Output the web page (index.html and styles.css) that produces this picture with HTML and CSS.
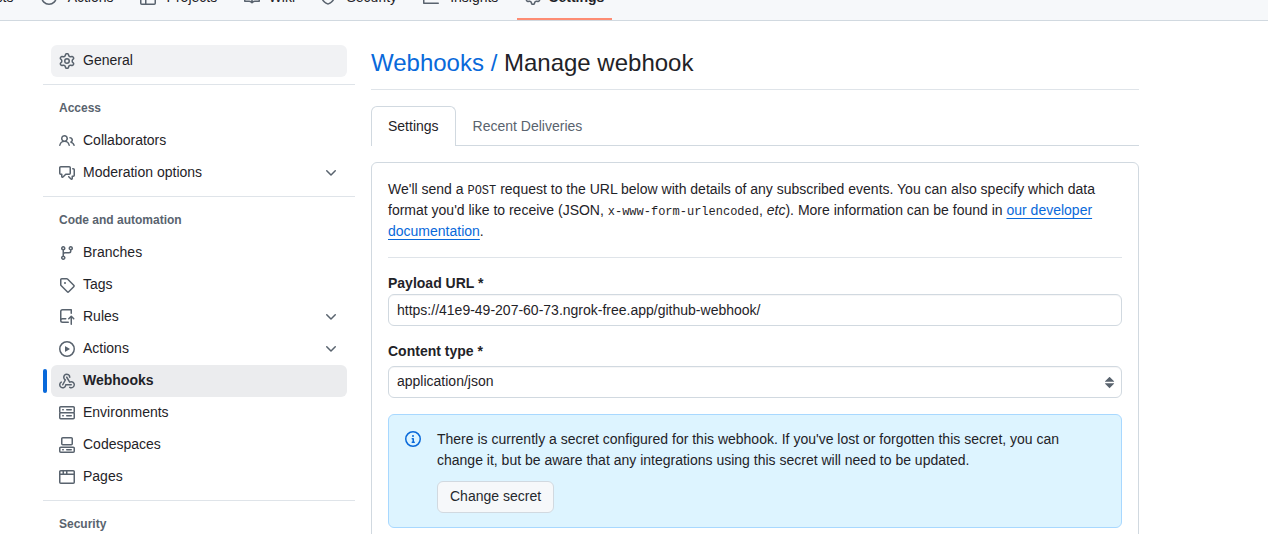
FILE: index.html
```html
<!DOCTYPE html>
<html lang="en">
<head>
<meta charset="utf-8">
<title>Manage webhook</title>
<link rel="stylesheet" href="styles.css">
</head>
<body>
<svg class="sprite" aria-hidden="true">
  <symbol id="play" viewBox="0 0 16 16"><path d="M8 0a8 8 0 1 1 0 16A8 8 0 0 1 8 0ZM1.5 8a6.5 6.5 0 1 0 13 0 6.5 6.5 0 0 0-13 0Zm4.879-2.773 4.264 2.559a.25.25 0 0 1 0 .428l-4.264 2.559A.25.25 0 0 1 6 10.559V5.442a.25.25 0 0 1 .379-.215Z"/></symbol>
  <symbol id="table" viewBox="0 0 16 16"><path d="M0 1.75C0 .784.784 0 1.75 0h12.5C15.216 0 16 .784 16 1.75v12.5A1.75 1.75 0 0 1 14.25 16H1.75A1.75 1.75 0 0 1 0 14.25ZM6.5 6.5v8h7.75a.25.25 0 0 0 .25-.25V6.5Zm8-1.5V1.75a.25.25 0 0 0-.25-.25H6.5V5Zm-13 1.5v7.75c0 .138.112.25.25.25H5v-8ZM5 5V1.5H1.75a.25.25 0 0 0-.25.25V5Z"/></symbol>
  <symbol id="book" viewBox="0 0 16 16"><path d="M0 1.75A.75.75 0 0 1 .75 1h4.253c1.227 0 2.317.59 3 1.501A3.743 3.743 0 0 1 11.006 1h4.245a.75.75 0 0 1 .75.75v10.5a.75.75 0 0 1-.75.75h-4.507a2.25 2.25 0 0 0-1.591.659l-.622.621a.75.75 0 0 1-1.06 0l-.622-.621A2.25 2.25 0 0 0 5.258 13H.75a.75.75 0 0 1-.75-.75Zm7.251 10.324.004-5.073-.002-2.253A2.25 2.25 0 0 0 5.003 2.5H1.5v9h3.757a3.75 3.75 0 0 1 1.994.574ZM8.755 4.75l-.004 7.322a3.752 3.752 0 0 1 1.992-.572H14.5v-9h-3.495a2.25 2.25 0 0 0-2.25 2.25Z"/></symbol>
  <symbol id="shield" viewBox="0 0 16 16"><path d="M7.467.133a1.748 1.748 0 0 1 1.066 0l5.25 1.68A1.75 1.75 0 0 1 15 3.48V7c0 1.566-.32 3.182-1.303 4.682-.983 1.498-2.585 2.813-5.032 3.855a1.697 1.697 0 0 1-1.33 0c-2.447-1.042-4.049-2.357-5.032-3.855C1.32 10.182 1 8.566 1 7V3.48a1.755 1.755 0 0 1 1.217-1.667Zm.61 1.429a.25.25 0 0 0-.153 0l-5.25 1.68a.25.25 0 0 0-.174.238V7c0 1.358.275 2.666 1.057 3.86.784 1.194 2.121 2.34 4.366 3.297a.196.196 0 0 0 .154 0c2.245-.956 3.582-2.104 4.366-3.298C13.225 9.666 13.5 8.36 13.5 7V3.48a.251.251 0 0 0-.174-.237l-5.25-1.68Z"/></symbol>
  <symbol id="graph" viewBox="0 0 16 16"><path d="M1.5 1.75V13.5h13.75a.75.75 0 0 1 0 1.5H.75a.75.75 0 0 1-.75-.75V1.75a.75.75 0 0 1 1.5 0Zm14.28 2.53-5.25 5.25a.75.75 0 0 1-1.06 0L7 7.06 4.28 9.78a.751.751 0 0 1-1.06-1.06l3.25-3.25a.75.75 0 0 1 1.06 0L10 7.94l4.72-4.72a.751.751 0 0 1 1.06 1.06Z"/></symbol>
  <symbol id="gear" viewBox="0 0 16 16"><path d="M8 0a8.2 8.2 0 0 1 .701.031C9.444.095 9.99.645 10.16 1.29l.288 1.107c.018.066.079.158.212.224.231.114.454.243.668.386.123.082.233.09.299.071l1.103-.303c.644-.176 1.392.021 1.82.63.27.385.506.792.704 1.218.315.675.111 1.422-.364 1.891l-.814.806c-.049.048-.098.147-.088.294.016.257.016.515 0 .772-.01.147.038.246.088.294l.814.806c.475.469.679 1.216.364 1.891a7.977 7.977 0 0 1-.704 1.217c-.428.61-1.176.807-1.82.63l-1.102-.302c-.067-.019-.177-.011-.3.071a5.909 5.909 0 0 1-.668.386c-.133.066-.194.158-.211.224l-.29 1.106c-.168.646-.715 1.196-1.458 1.26a8.006 8.006 0 0 1-1.402 0c-.743-.064-1.289-.614-1.458-1.26l-.289-1.106c-.018-.066-.079-.158-.212-.224a5.738 5.738 0 0 1-.668-.386c-.123-.082-.233-.09-.299-.071l-1.103.303c-.644.176-1.392-.021-1.82-.63a8.12 8.12 0 0 1-.704-1.218c-.315-.675-.111-1.422.363-1.891l.815-.806c.05-.048.098-.147.088-.294a6.214 6.214 0 0 1 0-.772c.01-.147-.038-.246-.088-.294l-.815-.806C.635 6.045.431 5.298.746 4.623a7.92 7.92 0 0 1 .704-1.217c.428-.61 1.176-.807 1.82-.63l1.102.302c.067.019.177.011.3-.071.214-.143.437-.272.668-.386.133-.066.194-.158.211-.224l.29-1.106C6.009.645 6.556.095 7.299.03 7.53.01 7.764 0 8 0Zm-.571 1.525c-.036.003-.108.036-.137.146l-.289 1.105c-.147.561-.549.967-.998 1.189-.173.086-.34.183-.5.29-.417.278-.97.423-1.529.27l-1.103-.303c-.109-.03-.175.016-.195.045-.22.312-.412.644-.573.99-.014.031-.021.11.059.19l.815.806c.411.406.562.957.53 1.456a4.709 4.709 0 0 0 0 .582c.032.499-.119 1.05-.53 1.456l-.815.806c-.081.08-.073.159-.059.19.162.346.353.677.573.989.02.03.085.076.195.046l1.102-.303c.56-.153 1.113-.008 1.53.27.161.107.328.204.501.29.447.222.85.629.997 1.189l.289 1.105c.029.109.101.143.137.146a6.6 6.6 0 0 0 1.142 0c.036-.003.108-.036.137-.146l.289-1.105c.147-.561.549-.967.998-1.189.173-.086.34-.183.5-.29.417-.278.97-.423 1.529-.27l1.103.303c.109.029.175-.016.195-.045.22-.313.411-.644.573-.99.014-.031.021-.11-.059-.19l-.815-.806c-.411-.406-.562-.957-.53-1.456a4.709 4.709 0 0 0 0-.582c-.032-.499.119-1.05.53-1.456l.815-.806c.081-.08.073-.159.059-.19a6.464 6.464 0 0 0-.573-.989c-.02-.03-.085-.076-.195-.046l-1.102.303c-.56.153-1.113.008-1.53-.27a4.44 4.44 0 0 0-.501-.29c-.447-.222-.85-.629-.997-1.189l-.289-1.105c-.029-.11-.101-.143-.137-.146a6.6 6.6 0 0 0-1.142 0ZM11 8a3 3 0 1 1-6 0 3 3 0 0 1 6 0ZM9.5 8a1.5 1.5 0 1 0-3.001.001A1.5 1.5 0 0 0 9.5 8Z"/></symbol>
  <symbol id="people" viewBox="0 0 16 16"><path d="M2 5.5a3.5 3.5 0 1 1 5.898 2.549 5.508 5.508 0 0 1 3.034 4.084.75.75 0 1 1-1.482.235 4 4 0 0 0-7.9 0 .75.75 0 0 1-1.482-.236A5.507 5.507 0 0 1 3.102 8.05 3.493 3.493 0 0 1 2 5.5ZM11 4a3.001 3.001 0 0 1 2.22 5.018 5.01 5.01 0 0 1 2.56 3.012.749.749 0 0 1-.885.954.752.752 0 0 1-.549-.514 3.507 3.507 0 0 0-2.522-2.372.75.75 0 0 1-.574-.73v-.352a.75.75 0 0 1 .416-.672A1.5 1.5 0 0 0 11 5.5.75.75 0 0 1 11 4Zm-5.5-.5a2 2 0 1 0-.001 3.999A2 2 0 0 0 5.5 3.5Z"/></symbol>
  <symbol id="discussion" viewBox="0 0 16 16"><path d="M1.75 1h8.5c.966 0 1.75.784 1.75 1.75v5.5A1.75 1.75 0 0 1 10.25 10H7.061l-2.574 2.573A1.458 1.458 0 0 1 2 11.543V10h-.25A1.75 1.75 0 0 1 0 8.25v-5.5C0 1.784.784 1 1.75 1ZM1.5 2.75v5.5c0 .138.112.25.25.25h1a.75.75 0 0 1 .75.75v2.19l2.72-2.72a.749.749 0 0 1 .53-.22h3.5a.25.25 0 0 0 .25-.25v-5.5a.25.25 0 0 0-.25-.25h-8.5a.25.25 0 0 0-.25.25Zm13 2a.25.25 0 0 0-.25-.25h-.5a.75.75 0 0 1 0-1.5h.5c.966 0 1.75.784 1.75 1.75v5.5A1.75 1.75 0 0 1 14.25 12H14v1.543a1.458 1.458 0 0 1-2.487 1.03L9.22 12.28a.749.749 0 0 1 .326-1.275.749.749 0 0 1 .734.215l2.22 2.22v-2.19a.75.75 0 0 1 .75-.75h1a.25.25 0 0 0 .25-.25Z"/></symbol>
  <symbol id="branch" viewBox="0 0 16 16"><path d="M9.5 3.25a2.25 2.25 0 1 1 3 2.122V6A2.5 2.5 0 0 1 10 8.5H6a1 1 0 0 0-1 1v1.128a2.251 2.251 0 1 1-1.5 0V5.372a2.25 2.25 0 1 1 1.5 0v1.836A2.493 2.493 0 0 1 6 7h4a1 1 0 0 0 1-1v-.628A2.25 2.25 0 0 1 9.5 3.25Zm-6 0a.75.75 0 1 0 1.5 0 .75.75 0 0 0-1.5 0Zm8.25-.75a.75.75 0 1 0 0 1.5.75.75 0 0 0 0-1.5ZM4.25 12a.75.75 0 1 0 0 1.5.75.75 0 0 0 0-1.5Z"/></symbol>
  <symbol id="tag" viewBox="0 0 16 16"><path d="M1 7.775V2.75C1 1.784 1.784 1 2.75 1h5.025c.464 0 .91.184 1.238.513l6.25 6.25a1.75 1.75 0 0 1 0 2.474l-5.026 5.026a1.75 1.75 0 0 1-2.474 0l-6.25-6.25A1.752 1.752 0 0 1 1 7.775Zm1.5 0c0 .066.026.13.073.177l6.25 6.25a.25.25 0 0 0 .354 0l5.025-5.025a.25.25 0 0 0 0-.354l-6.25-6.25a.25.25 0 0 0-.177-.073H2.75a.25.25 0 0 0-.25.25ZM6 5a1 1 0 1 1 0 2 1 1 0 0 1 0-2Z"/></symbol>
  <symbol id="push" viewBox="0 0 16 16"><path d="M1 2.5A2.5 2.5 0 0 1 3.5 0h8.75a.75.75 0 0 1 .75.75v3.5a.75.75 0 0 1-1.5 0V1.5h-8a1 1 0 0 0-1 1v6.708A2.493 2.493 0 0 1 3.5 9h3.25a.75.75 0 0 1 0 1.5H3.5a1 1 0 0 0 0 2h5.75a.75.75 0 0 1 0 1.5H3.5A2.5 2.5 0 0 1 1 11.5Zm13.23 7.79-1.224-1.224v6.184a.75.75 0 0 1-1.5 0V9.066L10.28 10.29a.75.75 0 0 1-1.06-1.061l2.505-2.504a.75.75 0 0 1 1.06 0L15.29 9.23a.751.751 0 0 1-.018 1.042.751.751 0 0 1-1.042.018Z"/></symbol>
  <symbol id="webhook" viewBox="0 0 16 16"><path d="M5.5 4.25a2.25 2.25 0 0 1 4.5 0 .75.75 0 0 0 1.5 0 3.75 3.75 0 1 0-6.14 2.889l-2.272 4.258a.75.75 0 0 0 1.324.706L7 7.25a.75.75 0 0 0-.309-1.015A2.25 2.25 0 0 1 5.5 4.25Z"/><path d="M7.364 3.607a.75.75 0 0 1 1.03.257l2.608 4.349a3.75 3.75 0 1 1-.628 6.785.75.75 0 0 1 .752-1.299 2.25 2.25 0 1 0-.033-3.88.75.75 0 0 1-1.03-.256L7.107 4.636a.75.75 0 0 1 .257-1.03Z"/><path d="M2.9 8.776A.75.75 0 0 1 2.625 9.8 2.25 2.25 0 1 0 6 11.75a.75.75 0 0 1 .75-.751h5.5a.75.75 0 0 1 0 1.5H7.425a3.751 3.751 0 1 1-5.55-3.998.75.75 0 0 1 1.024.274Z"/></symbol>
  <symbol id="server" viewBox="0 0 16 16"><path d="M1.75 1h12.5c.966 0 1.75.784 1.75 1.75v4c0 .372-.116.717-.314 1 .198.283.314.628.314 1v4a1.75 1.75 0 0 1-1.75 1.75H1.75A1.75 1.75 0 0 1 0 12.75v-4c0-.358.109-.707.314-1a1.739 1.739 0 0 1-.314-1v-4C0 1.784.784 1 1.75 1ZM1.5 2.75v4c0 .138.112.25.25.25h12.5a.25.25 0 0 0 .25-.25v-4a.25.25 0 0 0-.25-.25H1.75a.25.25 0 0 0-.25.25Zm.25 5.75a.25.25 0 0 0-.25.25v4c0 .138.112.25.25.25h12.5a.25.25 0 0 0 .25-.25v-4a.25.25 0 0 0-.25-.25ZM7 4.75A.75.75 0 0 1 7.75 4h4.5a.75.75 0 0 1 0 1.5h-4.5A.75.75 0 0 1 7 4.75ZM7.75 10h4.5a.75.75 0 0 1 0 1.5h-4.5a.75.75 0 0 1 0-1.5ZM3 4.75A.75.75 0 0 1 3.75 4h.5a.75.75 0 0 1 0 1.5h-.5A.75.75 0 0 1 3 4.75ZM3.75 10h.5a.75.75 0 0 1 0 1.5h-.5a.75.75 0 0 1 0-1.5Z"/></symbol>
  <symbol id="codespaces" viewBox="0 0 16 16"><path d="M0 11.25c0-.966.784-1.75 1.75-1.75h12.5c.966 0 1.75.784 1.75 1.75v3A1.75 1.75 0 0 1 14.25 16H1.75A1.75 1.75 0 0 1 0 14.25Zm2-9.5C2 .784 2.784 0 3.75 0h8.5C13.216 0 14 .784 14 1.75v5a1.75 1.75 0 0 1-1.75 1.75h-8.5A1.75 1.75 0 0 1 2 6.75Zm1.75-.25a.25.25 0 0 0-.25.25v5c0 .138.112.25.25.25h8.5a.25.25 0 0 0 .25-.25v-5a.25.25 0 0 0-.25-.25Zm-2 9.5a.25.25 0 0 0-.25.25v3c0 .138.112.25.25.25h12.5a.25.25 0 0 0 .25-.25v-3a.25.25 0 0 0-.25-.25Z"/><path d="M7 12.75a.75.75 0 0 1 .75-.75h4.5a.75.75 0 0 1 0 1.5h-4.5a.75.75 0 0 1-.75-.75Zm-4 0a.75.75 0 0 1 .75-.75h.5a.75.75 0 0 1 0 1.5h-.5a.75.75 0 0 1-.75-.75Z"/></symbol>
  <symbol id="browser" viewBox="0 0 16 16"><path d="M0 2.75C0 1.784.784 1 1.75 1h12.5c.966 0 1.75.784 1.75 1.75v10.5A1.75 1.75 0 0 1 14.25 15H1.75A1.75 1.75 0 0 1 0 13.25ZM14.5 6h-13v7.25c0 .138.112.25.25.25h12.5a.25.25 0 0 0 .25-.25Zm-6-3.5v2h6V2.75a.25.25 0 0 0-.25-.25ZM5 2.5v2h2v-2Zm-3.25 0a.25.25 0 0 0-.25.25V4.5h2v-2Z"/></symbol>
  <symbol id="info" viewBox="0 0 16 16"><path d="M0 8a8 8 0 1 1 16 0A8 8 0 0 1 0 8Zm8-6.5a6.5 6.5 0 1 0 0 13 6.5 6.5 0 0 0 0-13ZM6.5 7.75A.75.75 0 0 1 7.25 7h1a.75.75 0 0 1 .75.75v2.75h.25a.75.75 0 0 1 0 1.5h-2a.75.75 0 0 1 0-1.5h.25v-2h-.25a.75.75 0 0 1-.75-.75ZM8 6a1 1 0 1 1 0-2 1 1 0 0 1 0 2Z"/></symbol>
  <symbol id="chevron" viewBox="0 0 16 16"><path d="M12.78 5.22a.749.749 0 0 1 0 1.06l-4.25 4.25a.749.749 0 0 1-1.06 0L3.22 6.28a.749.749 0 1 1 1.06-1.06L8 8.939l3.72-3.719a.749.749 0 0 1 1.06 0Z"/></symbol>
  <symbol id="updown" viewBox="0 0 16 16"><path d="m4.074 9.427 3.396 3.396a.25.25 0 0 0 .354 0l3.396-3.396A.25.25 0 0 0 11.043 9H4.25a.25.25 0 0 0-.177.427ZM4.074 7.47 7.47 4.073a.25.25 0 0 1 .354 0L11.22 7.47a.25.25 0 0 1-.177.426H4.25a.25.25 0 0 1-.177-.426Z"/></symbol>
</svg>

<header class="topbar">
  <nav class="repo-nav" aria-label="Repository">
    <a class="repo-link" href="#"><span class="repo-text" data-text="Pull requests">Pull requests</span></a>
    <a class="repo-link" href="#"><svg class="icon"><use href="#play"/></svg><span class="repo-text" data-text="Actions">Actions</span></a>
    <a class="repo-link" href="#"><svg class="icon"><use href="#table"/></svg><span class="repo-text" data-text="Projects">Projects</span></a>
    <a class="repo-link" href="#"><svg class="icon"><use href="#book"/></svg><span class="repo-text" data-text="Wiki">Wiki</span></a>
    <a class="repo-link" href="#"><svg class="icon"><use href="#shield"/></svg><span class="repo-text" data-text="Security">Security</span></a>
    <a class="repo-link" href="#"><svg class="icon"><use href="#graph"/></svg><span class="repo-text" data-text="Insights">Insights</span></a>
    <a class="repo-link current" href="#" aria-current="page"><svg class="icon"><use href="#gear"/></svg><span class="repo-text" data-text="Settings">Settings</span></a>
  </nav>
</header>

<div class="layout">
  <nav class="sidebar" aria-label="Settings">
    <ul class="menu">
      <li><a class="menu-item hovered" href="#"><svg class="icon"><use href="#gear"/></svg><span class="menu-label">General</span></a></li>
    </ul>
    <section class="group">
      <h2 class="group-title">Access</h2>
      <ul class="menu">
        <li><a class="menu-item" href="#"><svg class="icon"><use href="#people"/></svg><span class="menu-label">Collaborators</span></a></li>
        <li><button class="menu-item" type="button"><svg class="icon"><use href="#discussion"/></svg><span class="menu-label">Moderation options</span><svg class="icon"><use href="#chevron"/></svg></button></li>
      </ul>
    </section>
    <section class="group">
      <h2 class="group-title">Code and automation</h2>
      <ul class="menu">
        <li><a class="menu-item" href="#"><svg class="icon"><use href="#branch"/></svg><span class="menu-label">Branches</span></a></li>
        <li><a class="menu-item" href="#"><svg class="icon"><use href="#tag"/></svg><span class="menu-label">Tags</span></a></li>
        <li><button class="menu-item" type="button"><svg class="icon"><use href="#push"/></svg><span class="menu-label">Rules</span><svg class="icon"><use href="#chevron"/></svg></button></li>
        <li><button class="menu-item" type="button"><svg class="icon"><use href="#play"/></svg><span class="menu-label">Actions</span><svg class="icon"><use href="#chevron"/></svg></button></li>
        <li><a class="menu-item active" href="#" aria-current="page"><svg class="icon"><use href="#webhook"/></svg><span class="menu-label">Webhooks</span></a></li>
        <li><a class="menu-item" href="#"><svg class="icon"><use href="#server"/></svg><span class="menu-label">Environments</span></a></li>
        <li><a class="menu-item" href="#"><svg class="icon"><use href="#codespaces"/></svg><span class="menu-label">Codespaces</span></a></li>
        <li><a class="menu-item" href="#"><svg class="icon"><use href="#browser"/></svg><span class="menu-label">Pages</span></a></li>
      </ul>
    </section>
    <section class="group">
      <h2 class="group-title">Security</h2>
    </section>
  </nav>

  <main class="content">
    <h1 class="page-title"><a href="#">Webhooks /</a> Manage webhook</h1>
    <nav class="tabs" aria-label="Webhook">
      <a class="tab selected" href="#" aria-current="page">Settings</a>
      <a class="tab" href="#">Recent Deliveries</a>
    </nav>
    <form class="panel">
      <p class="intro">We'll send a <code>POST</code> request to the URL below with details of any subscribed events. You can also specify which data format you'd like to receive (JSON, <code>x-www-form-urlencoded</code>, <em>etc</em>). More information can be found in <a href="#">our developer documentation</a>.</p>
      <div class="field first">
        <label for="url">Payload URL *</label>
        <input class="control" id="url" type="text" value="https://41e9-49-207-60-73.ngrok-free.app/github-webhook/">
      </div>
      <div class="field spaced">
        <label for="type">Content type *</label>
        <div class="select-wrap">
          <select class="control" id="type"><option>application/json</option></select>
          <svg class="icon select-arrow"><use href="#updown"/></svg>
        </div>
      </div>
      <div class="flash">
        <svg class="icon flash-icon"><use href="#info"/></svg>
        <div class="flash-body">
          <p>There is currently a secret configured for this webhook. If you've lost or forgotten this secret, you can change it, but be aware that any integrations using this secret will need to be updated.</p>
          <button class="btn" type="button">Change secret</button>
        </div>
      </div>
    </form>
  </main>
</div>
</body>
</html>
```
FILE: styles.css
```css
* { box-sizing: border-box; }

body {
  margin: 0;
  height: 100vh;
  overflow: hidden;
  background: #fff;
  color: #1f2328;
  font-family: "Liberation Sans", Arial, sans-serif;
  font-size: 14px;
  line-height: 21px;
}

a { color: #0969da; text-decoration: none; }
h1, h2, p, ul { margin: 0; padding: 0; }
ul { list-style: none; }

.sprite { display: none; }
.icon { flex: none; display: block; width: 16px; height: 16px; fill: #59636e; }

/* Repository navigation, scrolled partly out of view */
.topbar {
  display: flex;
  align-items: flex-end;
  height: 21px;
  overflow: hidden;
  background: #f6f8fa;
  border-bottom: 1px solid #d1d9e0;
}
.repo-nav { display: flex; gap: 8px; margin-left: -79px; }
.repo-link {
  display: flex;
  align-items: center;
  gap: 8px;
  padding: 0 8px 11px;
  border-bottom: 2px solid transparent;
  color: #1f2328;
  line-height: 20px;
  white-space: nowrap;
}
.repo-text { display: grid; justify-items: center; }
.repo-text::after {
  content: attr(data-text);
  height: 0;
  overflow: hidden;
  visibility: hidden;
  font-weight: 700;
}
.current { border-color: #fd8c73; font-weight: 700; }

.layout {
  display: grid;
  grid-template-columns: 312px minmax(0, 768px);
  gap: 16px;
  padding: 24px 43px;
}

.group { margin-top: 7px; border-top: 1px solid #d1d9e0b3; }
.group-title {
  padding: 14px 16px 8px;
  color: #59636e;
  font-size: 12px;
  line-height: 18px;
}
.menu { padding: 0 8px; }
.menu-item {
  position: relative;
  display: flex;
  align-items: center;
  gap: 8px;
  width: 100%;
  height: 32px;
  padding: 0 8px;
  border: 0;
  border-radius: 6px;
  background: none;
  color: #1f2328;
  font: inherit;
  line-height: 20px;
  text-align: left;
}
.menu-label { flex: 1; padding-bottom: 2px; }
.hovered { background: #f1f2f4; }
.active { background: #ebecee; font-weight: 700; }
.active::before {
  content: "";
  position: absolute;
  left: -8px;
  top: 4px;
  width: 4px;
  height: 24px;
  border-radius: 6px;
  background: #0969da;
}

.page-title {
  padding-bottom: 8px;
  border-bottom: 1px solid #d1d9e0b3;
  font-size: 24px;
  font-weight: 400;
  line-height: 36px;
}
.tabs { display: flex; margin: 16px 0; border-bottom: 1px solid #d1d9e0; }
.tab {
  margin-bottom: -1px;
  padding: 8px 16px;
  border: 1px solid transparent;
  border-bottom: 0;
  color: #59636e;
  line-height: 23px;
}
.selected {
  border-color: #d1d9e0;
  border-radius: 6px 6px 0 0;
  background: #fff;
  color: #1f2328;
}

.panel { padding: 16px; border: 1px solid #d1d9e0; border-radius: 6px; }
.intro { padding-bottom: 15px; border-bottom: 1px solid #d1d9e0b3; }
.intro a { text-decoration: underline; text-underline-offset: 3px; }
code { font-family: "Liberation Mono", monospace; font-size: 12px; line-height: 12px; }

.field { display: flex; flex-direction: column; margin-top: 15px; }
.field label { font-weight: 700; }
.spaced { gap: 4px; }
.control {
  display: block;
  width: 100%;
  height: 32px;
  padding: 0 8px;
  border: 1px solid #d1d9e0;
  border-radius: 6px;
  background: #fff;
  box-shadow: inset 0 1px 0 #1f23280a;
  color: #1f2328;
  font: inherit;
  appearance: none;
}
select.control { padding-bottom: 2px; }
.select-wrap { position: relative; }
.select-arrow {
  position: absolute;
  right: 2px;
  top: 6px;
  width: 20px;
  height: 20px;
  pointer-events: none;
}

.flash {
  display: flex;
  gap: 16px;
  margin-top: 16px;
  padding: 14px 16px;
  border: 1px solid #a8d8ff;
  border-radius: 6px;
  background: #ddf4ff;
}
.flash-icon { margin-top: 2px; fill: #0969da; }
.btn {
  margin-top: 10px;
  height: 32px;
  padding: 0 12px 2px;
  border: 1px solid #d1d9e0;
  border-radius: 6px;
  background: #f6f8fa;
  color: #25292e;
  font: inherit;
}
```
